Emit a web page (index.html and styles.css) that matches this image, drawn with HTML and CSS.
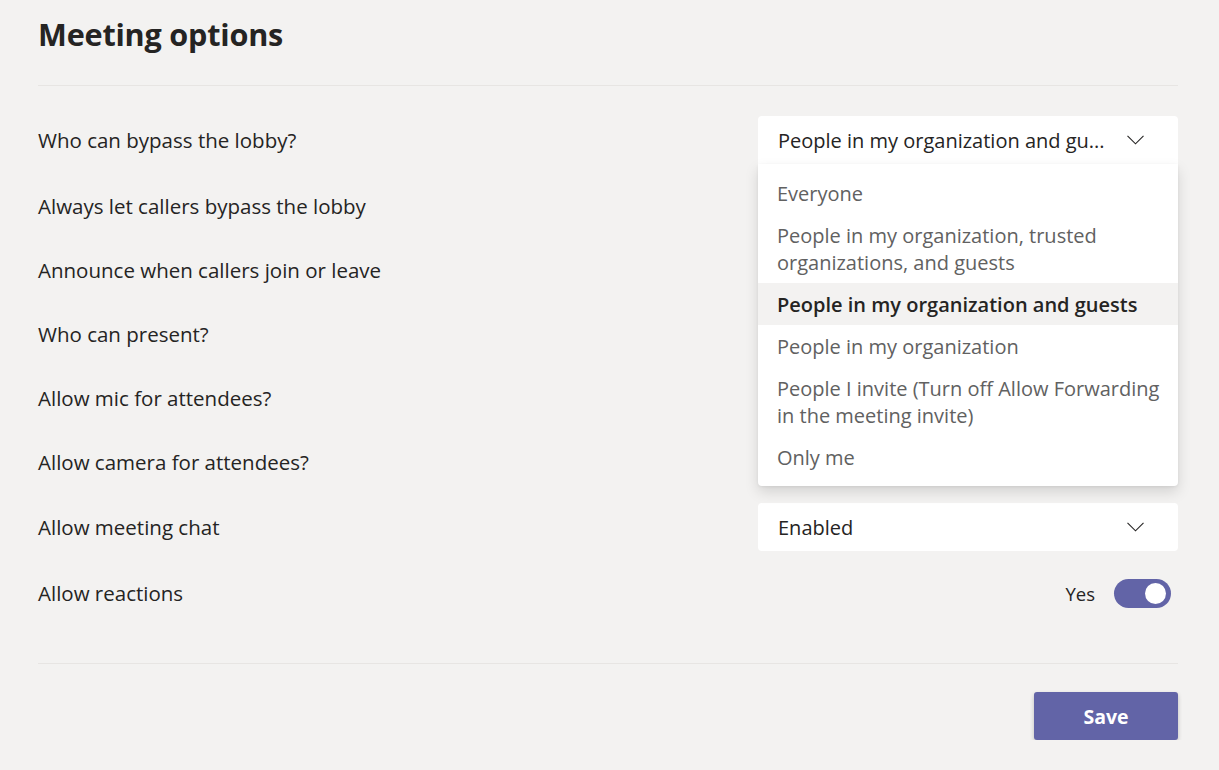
FILE: index.html
```html
<!DOCTYPE html>
<html lang="en">
<head>
<meta charset="utf-8">
<title>Meeting options</title>
<link rel="stylesheet" href="styles.css">
</head>
<body>
<div class="page">
  <header class="header">
    <h1 class="title">Meeting options</h1>
  </header>

  <section class="options">
    <div class="row">
      <div class="label">Who can bypass the lobby?</div>
      <div class="control">
        <div class="select open">
          <span class="select-value">People in my organization and gu...</span>
          <svg class="chevron" width="17" height="10" viewBox="0 0 17 10"><path d="M0.5 0.8 L8.5 8.8 L16.5 0.8" fill="none" stroke="#252423" stroke-width="1.1"/></svg>
          <ul class="menu">
            <li class="item">Everyone</li>
            <li class="item">People in my organization, trusted organizations, and guests</li>
            <li class="item selected">People in my organization and guests</li>
            <li class="item">People in my organization</li>
            <li class="item">People I invite (Turn off Allow Forwarding in the meeting invite)</li>
            <li class="item">Only me</li>
          </ul>
        </div>
      </div>
    </div>

    <div class="row">
      <div class="label">Always let callers bypass the lobby</div>
      <div class="control end">
        <span class="toggle"><span class="knob"></span></span>
      </div>
    </div>

    <div class="row">
      <div class="label">Announce when callers join or leave</div>
      <div class="control end">
        <span class="toggle"><span class="knob"></span></span>
      </div>
    </div>

    <div class="row">
      <div class="label">Who can present?</div>
      <div class="control">
        <div class="select"></div>
      </div>
    </div>

    <div class="row">
      <div class="label">Allow mic for attendees?</div>
      <div class="control end">
        <span class="toggle"><span class="knob"></span></span>
      </div>
    </div>

    <div class="row">
      <div class="label">Allow camera for attendees?</div>
      <div class="control end">
        <span class="toggle"><span class="knob"></span></span>
      </div>
    </div>

    <div class="row">
      <div class="label">Allow meeting chat</div>
      <div class="control">
        <div class="select">
          <span class="select-value">Enabled</span>
          <svg class="chevron" width="17" height="10" viewBox="0 0 17 10"><path d="M0.5 0.8 L8.5 8.8 L16.5 0.8" fill="none" stroke="#252423" stroke-width="1.1"/></svg>
        </div>
      </div>
    </div>

    <div class="row">
      <div class="label">Allow reactions</div>
      <div class="control end">
        <span class="toggle-text">Yes</span>
        <span class="toggle"><span class="knob"></span></span>
      </div>
    </div>
  </section>

  <footer class="footer">
    <button class="save">Save</button>
  </footer>
</div>
</body>
</html>
```

FILE: styles.css
```css
* { box-sizing: border-box; }

html, body {
  margin: 0;
  padding: 0;
  background: #f3f2f1;
}

body {
  font-family: "Segoe UI", "Open Sans", "Noto Sans", sans-serif;
  color: #252423;
  font-size: 20px;
}

.page {
  width: 1219px;
  padding: 0 41px 0 38px;
}

.header {
  height: 86px;
  border-bottom: 1px solid #e7e5e3;
}

.title {
  margin: 0;
  padding-top: 14px;
  font-size: 30.6px;
  line-height: 40px;
  font-weight: 700;
  color: #252423;
  letter-spacing: -0.2px;
}

.options {
  padding-top: 21px;
  padding-bottom: 37px;
  border-bottom: 1px solid #e7e5e3;
}

.row {
  display: grid;
  grid-template-columns: 1fr 420px;
  align-items: center;
  height: 64px;
}

.row:nth-child(1) { height: 66px; }
.row:nth-child(2) { height: 65px; }
.row:nth-child(3) { height: 63px; }
.row:nth-child(4) { height: 65px; }
.row:nth-child(5) { height: 64px; }
.row:nth-child(6) { height: 64px; }
.row:nth-child(7) { height: 66px; }
.row:nth-child(8) { height: 66px; }

.label {
  font-size: 20.5px;
  line-height: 26px;
  color: #252423;
}

.control {
  display: flex;
  align-items: center;
}

.control.end {
  justify-content: flex-end;
  padding-right: 7px;
}

.select {
  position: relative;
  width: 420px;
  height: 48px;
  background: #ffffff;
  border-radius: 4px;
  display: flex;
  align-items: center;
  justify-content: space-between;
  padding: 0 34px 0 20px;
}

.select.open {
  border-radius: 4px 4px 0 0;
  z-index: 5;
}

.select-value {
  color: #252423;
  white-space: nowrap;
}

.chevron {
  display: block;
}

.menu {
  position: absolute;
  top: 48px;
  left: 0;
  width: 420px;
  margin: 0;
  padding: 8px 0 8px;
  list-style: none;
  background: #ffffff;
  border-radius: 0 0 4px 4px;
  box-shadow: 0 6px 14px rgba(0, 0, 0, 0.13), 0 1px 3px rgba(0, 0, 0, 0.06);
}

.item {
  padding: 7.5px 12px 7.5px 19px;
  line-height: 27px;
  color: #616161;
}

.item.selected {
  background: #f3f2f1;
  color: #252423;
  font-weight: 600;
}

.toggle-text {
  font-size: 18.5px;
  color: #252423;
  margin-right: 19px;
}

.toggle {
  width: 57px;
  height: 29px;
  border-radius: 15px;
  background: #6264a7;
  display: flex;
  align-items: center;
  justify-content: flex-end;
  padding-right: 5px;
}

.knob {
  width: 21px;
  height: 21px;
  border-radius: 50%;
  background: #ffffff;
}

.footer {
  display: flex;
  justify-content: flex-end;
  padding-top: 28px;
}

.save {
  width: 144px;
  height: 48px;
  border: none;
  border-radius: 3px;
  background: #6264a7;
  color: #ffffff;
  font-family: inherit;
  font-size: 19.5px;
  font-weight: 700;
  box-shadow: 0 2px 4px rgba(0, 0, 0, 0.22);
}
```
